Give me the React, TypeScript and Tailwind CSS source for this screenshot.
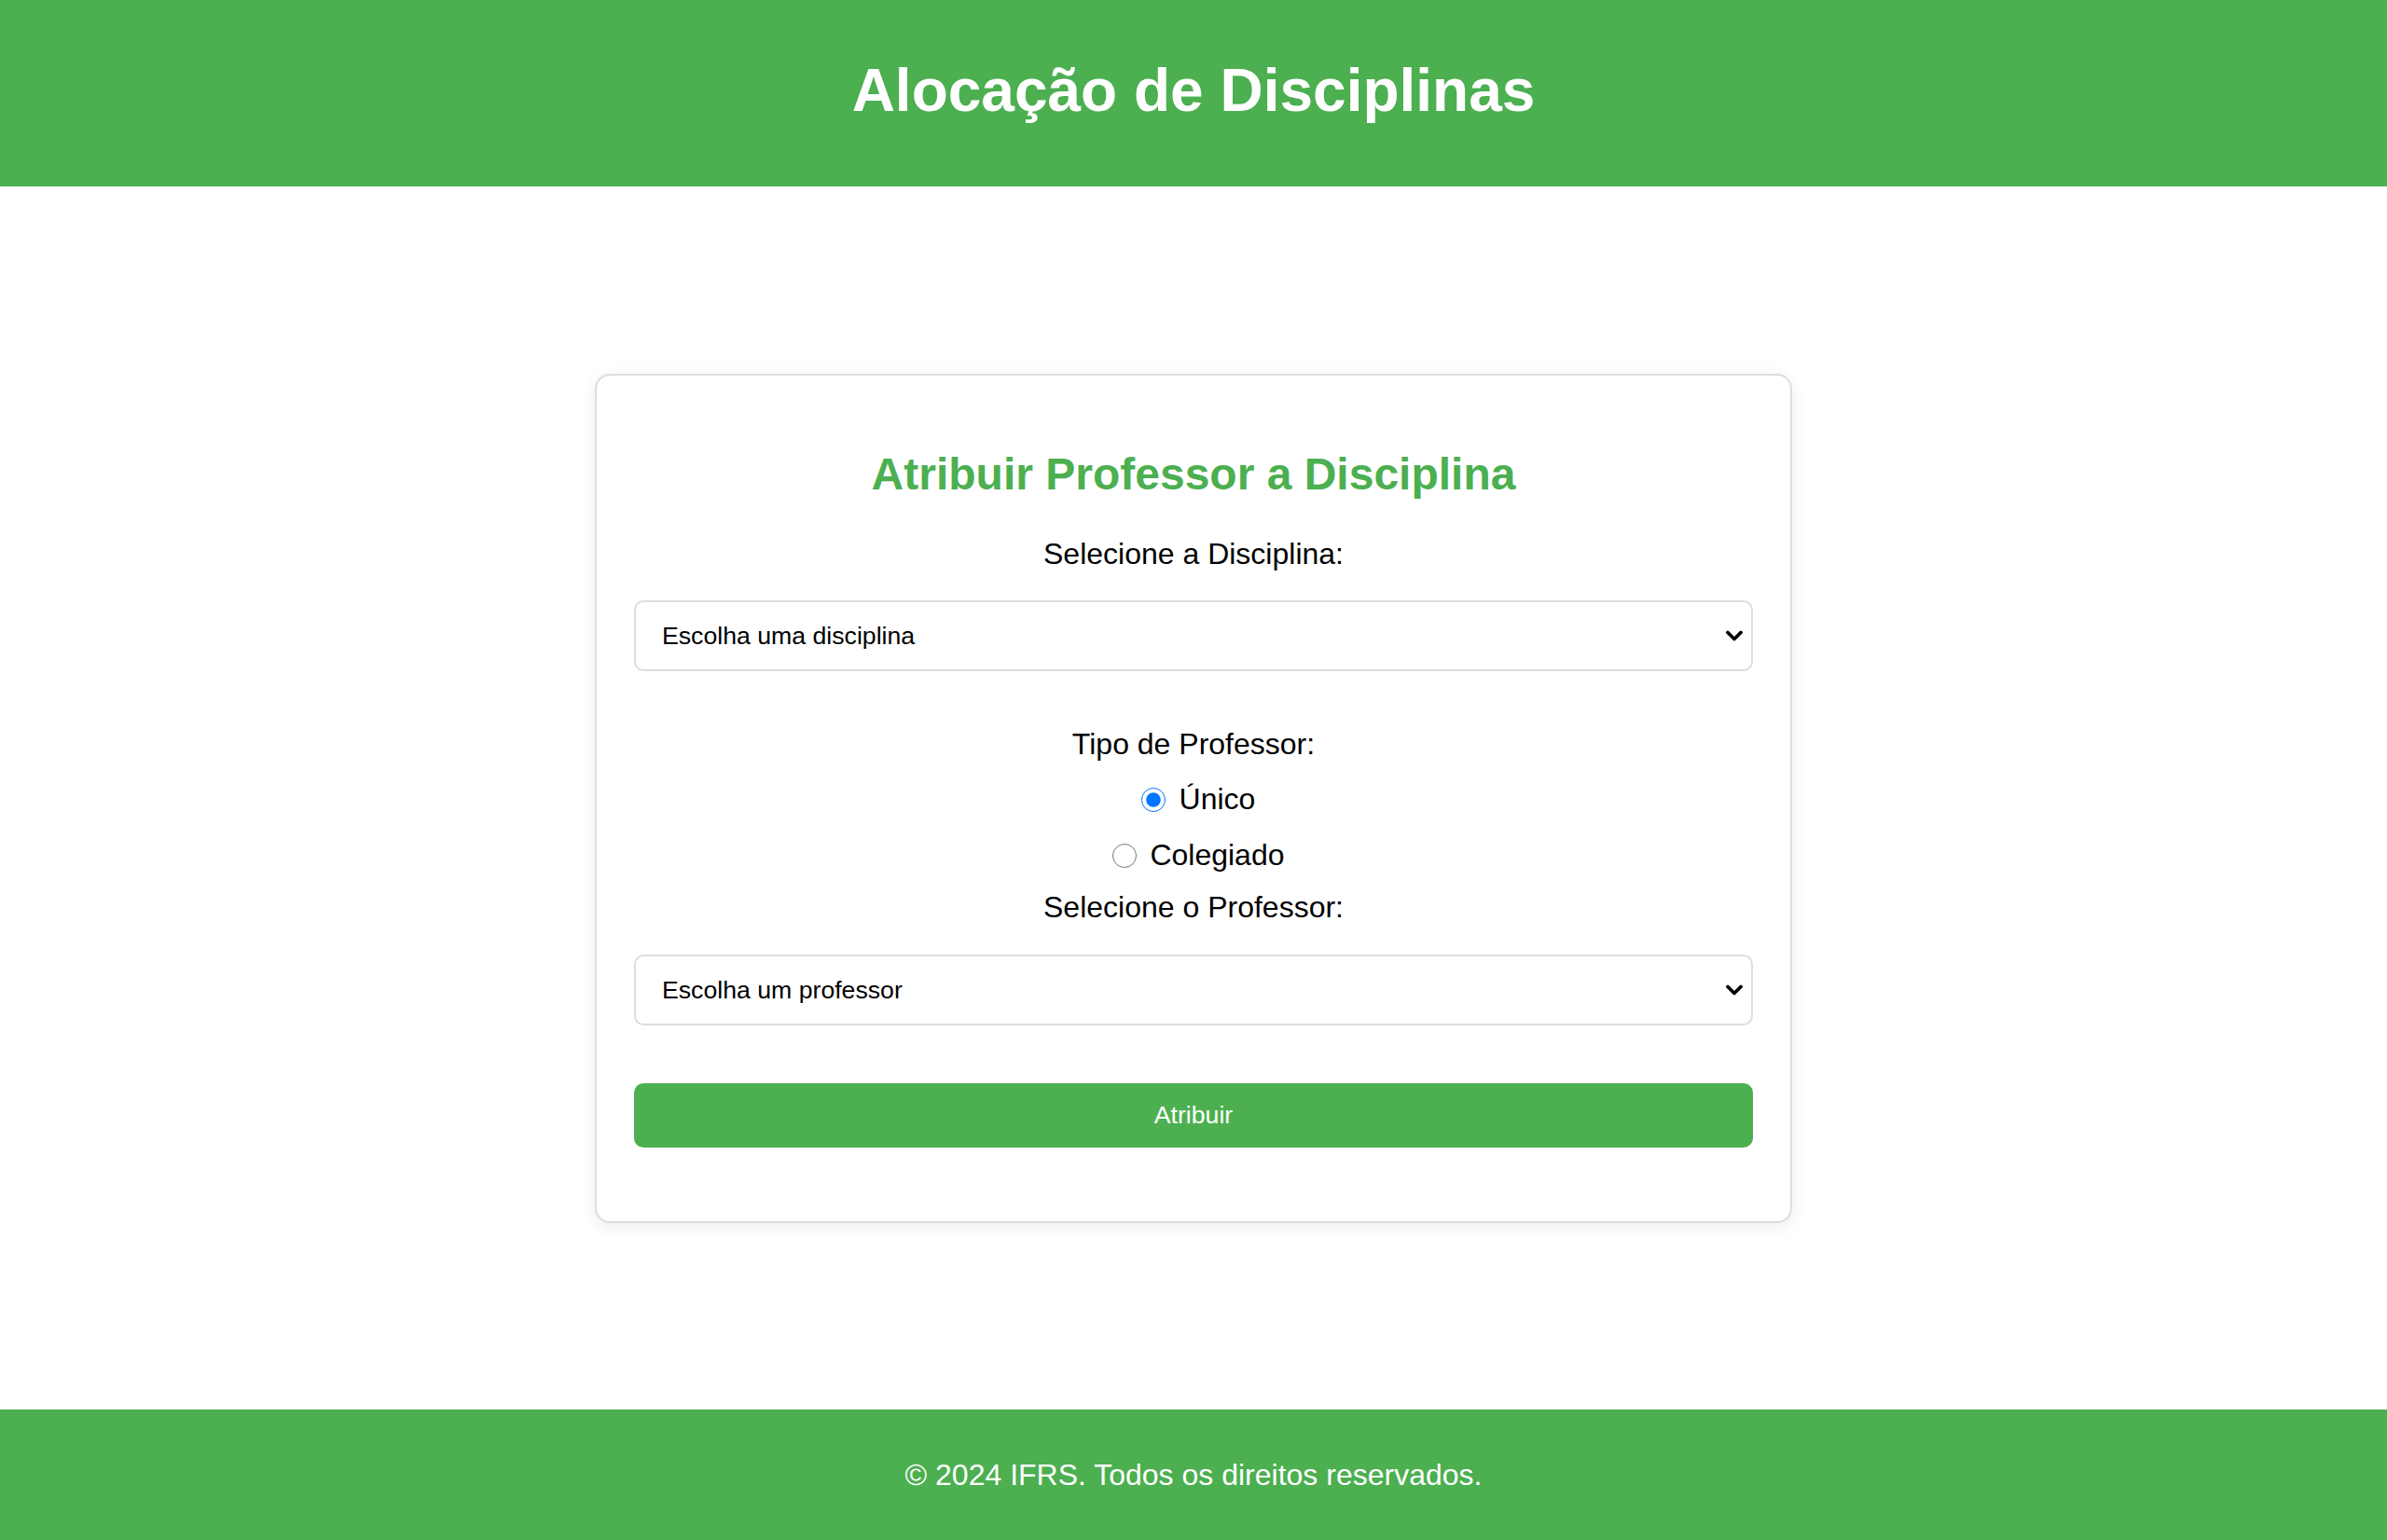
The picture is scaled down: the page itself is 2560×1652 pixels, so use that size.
import { useState } from "react";

// ─── Chevron for the selects ────────────────────────────────────────────────
function Chevron() {
  return (
    <svg
      viewBox="0 0 18 11"
      className="absolute right-[11px] top-1/2 -translate-y-1/2 w-[18px] h-[11px] pointer-events-none"
      fill="none"
      aria-hidden
    >
      <path d="M2 2 L9 9 L16 2" stroke="#000" strokeWidth="3.6" strokeLinecap="square" />
    </svg>
  );
}

function Select({ placeholder }: { placeholder: string }) {
  return (
    <div className="relative w-full">
      <select
        defaultValue=""
        className="w-full h-[76px] appearance-none bg-white border-2 border-[#dddddd] rounded-[10px] pl-[28px] pr-[48px] text-[26.67px] text-black outline-none font-['Liberation_Sans',Arial,sans-serif]"
      >
        <option value="" disabled>
          {placeholder}
        </option>
      </select>
      <Chevron />
    </div>
  );
}

export default function App() {
  const [tipo, setTipo] = useState("unico");

  return (
    <div className="min-h-screen flex flex-col bg-white font-['Liberation_Sans',Arial,sans-serif] text-black">
      {/* Header */}
      <header className="h-[200px] shrink-0 bg-[#4caf50] flex items-center justify-center pb-[4px]">
        <h1 className="text-[64px] leading-[1.15] font-bold text-white">Alocação de Disciplinas</h1>
      </header>

      {/* Main */}
      <main className="flex-1 flex items-center justify-center">
        <div className="w-[1284px] bg-white border-2 border-[#dddddd] rounded-[16px] shadow-[0_4px_18px_rgba(0,0,0,0.08)] px-[40px] pt-[78px] pb-[79px]">
          <h2 className="text-[48px] leading-[55px] font-bold text-[#4caf50] text-center mb-[40px]">
            Atribuir Professor a Disciplina
          </h2>

          <label className="block text-[32px] leading-[37px] text-center mb-[31px]">
            Selecione a Disciplina:
          </label>
          <Select placeholder="Escolha uma disciplina" />

          <div className="mt-[60px] text-[32px] leading-[37px] text-center">Tipo de Professor:</div>

          <div className="flex flex-col items-center">
            <label className="mt-[22px] flex items-center text-[32px] leading-[37px]">
              <input
                type="radio"
                name="tipo"
                checked={tipo === "unico"}
                onChange={() => setTipo("unico")}
                className="w-[26px] h-[26px] ml-[10px] mr-[6px] mt-[2px] accent-[#0075ff]"
              />
              <span>&nbsp;Único</span>
            </label>
            <label className="mt-[23px] flex items-center text-[32px] leading-[37px]">
              <input
                type="radio"
                name="tipo"
                checked={tipo === "colegiado"}
                onChange={() => setTipo("colegiado")}
                className="w-[26px] h-[26px] ml-[10px] mr-[6px] mt-[2px] accent-[#0075ff]"
              />
              <span>&nbsp;Colegiado</span>
            </label>
          </div>

          <label className="block mt-[19px] text-[32px] leading-[37px] text-center mb-[32px]">
            Selecione o Professor:
          </label>
          <Select placeholder="Escolha um professor" />

          <button
            type="button"
            className="mt-[62px] w-full h-[69px] bg-[#4caf50] text-white rounded-[10px] text-[26.67px] font-['Liberation_Sans',Arial,sans-serif]"
          >
            Atribuir
          </button>
        </div>
      </main>

      {/* Footer */}
      <footer className="h-[140px] shrink-0 bg-[#4caf50] flex items-center justify-center">
        <p className="text-[32px] leading-[37px] text-white">© 2024 IFRS. Todos os direitos reservados.</p>
      </footer>
    </div>
  );
}
